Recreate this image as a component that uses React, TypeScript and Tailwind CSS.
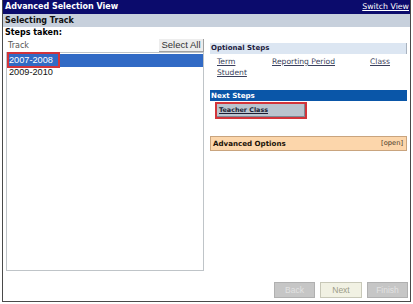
import React from 'react';

const headFont = "font-['DejaVu_Sans',sans-serif]";

const App = () => {
  return (
    <div className="w-[413px] h-[304px] bg-white">
      <div className="ml-[2px] w-[409px] h-[302px] border-x border-b border-[#4a4a4a] flex flex-col">
        {/* title bar */}
        <div className={`h-[14px] bg-[#0b0b6c] flex items-center justify-between pl-[2px] pr-[1px] ${headFont}`}>
          <span className="text-[8px] font-bold text-white leading-none">Advanced Selection View</span>
          <span className="text-[7.8px] text-white underline leading-none">Switch View</span>
        </div>
        <div className={`h-[13px] bg-[#c7d0dc] flex items-center pl-[2px] ${headFont}`}>
          <span className="text-[8px] font-bold text-[#111] leading-none">Selecting Track</span>
        </div>
        <div className={`h-[12px] flex items-center pl-[2px] ${headFont}`}>
          <span className="text-[8px] font-bold text-black leading-none">Steps taken:</span>
        </div>

        <div className="flex h-[232px]">
          {/* left column */}
          <div className="ml-[3px] w-[198px] flex flex-col">
            <div className="h-[13px] flex items-center justify-between">
              <span className={`text-[8px] text-[#555] pl-[2px] ${headFont}`}>Track</span>
              <button className="h-[13px] w-[45px] bg-[#ededed] border-r border-b border-[#a0a0a0] text-[9.5px] text-[#333] leading-none font-['Liberation_Sans',sans-serif]">
                Select All
              </button>
            </div>
            <div className="flex-1 border border-[#bfc4c8] pt-[1px] font-['Liberation_Sans',sans-serif]">
              <div className="relative h-[13px] bg-[#316ac5] flex items-center pl-[2px]">
                <span className="text-[9.2px] text-white leading-none">2007-2008</span>
                <div className="absolute left-[0px] top-[-2px] w-[53px] h-[16px] border-2 border-[#d2343a]"></div>
              </div>
              <div className="h-[12px] flex items-center pl-[2px]">
                <span className="text-[9.2px] text-[#111] leading-none">2009-2010</span>
              </div>
            </div>
          </div>

          {/* right column */}
          <div className={`ml-[6px] w-[197px] pt-[4px] flex flex-col ${headFont}`}>
            <div className="h-[11px] bg-[#dce6f2] border-r border-[#a9b3bf] flex items-center pl-[1px]">
              <span className="text-[7px] font-bold text-[#1c2040] leading-none">Optional Steps</span>
            </div>
            <div className="pl-[7px] pt-[2px] text-[7.6px] text-[#3a3f5c] leading-[11px]">
              <div className="flex">
                <span className="w-[55px] underline">Term</span>
                <span className="w-[98px] underline">Reporting Period</span>
                <span className="underline">Class</span>
              </div>
              <div className="flex">
                <span className="underline">Student</span>
              </div>
            </div>

            <div className="mt-[12px] h-[11px] bg-[#0a56a8] flex items-center pl-[1px]">
              <span className="text-[7.1px] font-bold text-white leading-none">Next Steps</span>
            </div>
            <div className="pl-[5px] pt-[1px] pb-[4px]">
              <div className="w-[92px] h-[17px] border-2 border-[#d2343a] p-0">
                <div className="h-full bg-[#bac4ce] border-r border-b border-[#7e8894] flex items-center pl-[2px]">
                  <span className="text-[6.4px] font-bold text-[#1a1d33] underline leading-none">Teacher Class</span>
                </div>
              </div>
            </div>

            <div className="mt-[13px] h-[15px] bg-[#fcd6ab] border border-[#c9a47e] flex items-center justify-between pl-[2px] pr-[3px]">
              <span className="text-[7.1px] font-bold text-[#1a1208] leading-none">Advanced Options</span>
              <span className="text-[6.7px] text-[#4a3a28] leading-none">[open]</span>
            </div>
          </div>
        </div>

        {/* wizard buttons */}
        <div className="mt-[11px] flex justify-end gap-[5px] pr-[2px] font-['Liberation_Sans',sans-serif]">
          <button className="w-[41px] h-[16px] bg-[#c6c6c6] border border-[#b0b0b0] text-[8.5px] text-[#e2e2e2] leading-none">Back</button>
          <button className="w-[42px] h-[16px] bg-[#f1f1e3] border border-[#c8c8b8] text-[8.5px] text-[#9c9c88] leading-none">Next</button>
          <button className="w-[41px] h-[16px] bg-[#c6c6c6] border border-[#b0b0b0] text-[8.5px] text-[#e2e2e2] leading-none">Finish</button>
        </div>
      </div>
    </div>
  );
};

export default App;
